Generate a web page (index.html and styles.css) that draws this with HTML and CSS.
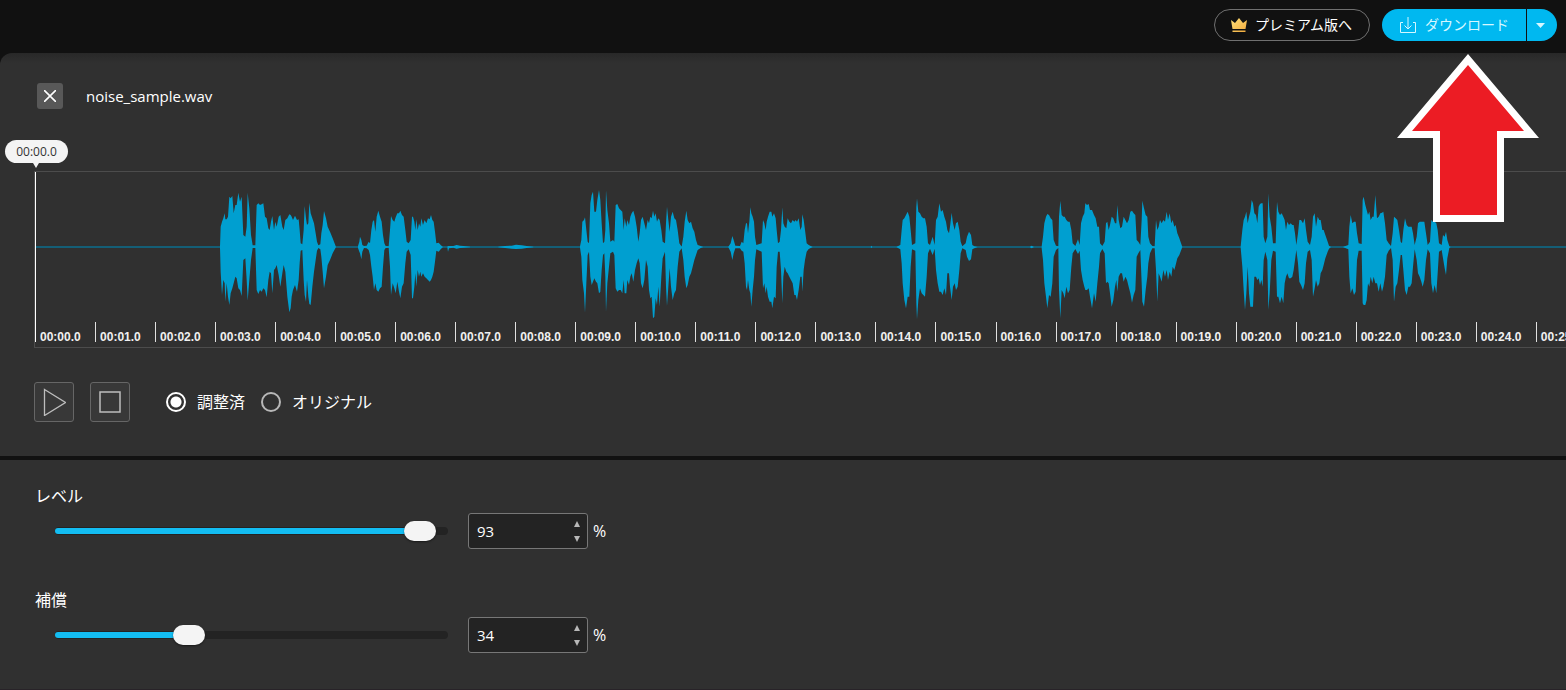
FILE: index.html
```html
<!DOCTYPE html>
<html lang="ja">
<head>
    <meta charset="UTF-8">
    <meta name="viewport" content="width=device-width, initial-scale=1.0">
    <title>noise_sample.wav</title>
    <link rel="stylesheet" href="styles.css">
</head>
<body>

    <header class="topbar">
        <button class="btn-premium" type="button">
            <svg width="16" height="15" viewBox="0 0 16 15" aria-hidden="true">
                <defs>
                    <linearGradient id="gold" x1="0" y1="0" x2="1" y2="1">
                        <stop offset="0" stop-color="#ffe27a"/>
                        <stop offset="1" stop-color="#f2a93b"/>
                    </linearGradient>
                </defs>
                <path fill="url(#gold)" d="M0 2L4 5L8 0L12 5L16 2L14.500 11H1.500Z M1.500 12.500H14.500V14H1.500Z"/>
            </svg>
            <span>プレミアム版へ</span>
        </button>
        <div class="download">
            <button class="download-main" type="button">
                <svg width="16" height="16" viewBox="0 0 16 16" fill="none" stroke="currentColor" aria-hidden="true">
                    <path d="M3 5.500H.5V15.500H15.500V5.500H13M8 0V12M4.500 8.500L8 12L11.500 8.500"/>
                </svg>
                <span>ダウンロード</span>
            </button>
            <button class="download-more" type="button" aria-label="その他の形式">
                <svg width="9" height="5" viewBox="0 0 9 5" fill="currentColor" aria-hidden="true"><path d="M0 0H9L4.500 5Z"/></svg>
            </button>
        </div>
    </header>

    <main>
        <section class="player">
            <div class="file-row">
                <button class="btn-close" type="button" aria-label="閉じる">
                    <svg width="12" height="12" viewBox="0 0 12 12" stroke="#fff" stroke-width="1.600" aria-hidden="true"><path d="M0 0L12 12M12 0L0 12"/></svg>
                </button>
                <span class="file-name">noise_sample.wav</span>
            </div>

            <div class="playhead-time">00:00.0</div>

            <div class="timeline">
                <svg class="wave" viewBox="0 0 4683 510" aria-hidden="true">
                    <path class="wave-axis" d="M0 201H4683"/>
                    <path class="wave-shape" id="waveShape"/>
                </svg>
                <ol class="ruler" id="ruler"></ol>
                <div class="playhead-line"></div>
            </div>

            <div class="controls">
                <button class="btn-square" type="button" aria-label="再生">
                    <svg width="24" height="28" viewBox="0 0 24 28" fill="none" stroke="#bdbdbd" stroke-width="1.300" aria-hidden="true"><path d="M2.500 1.500L23.500 14.500L2.500 27.500Z"/></svg>
                </button>
                <button class="btn-square" type="button" aria-label="停止">
                    <svg width="22" height="22" viewBox="0 0 22 22" fill="none" stroke="#bdbdbd" stroke-width="1.500" aria-hidden="true"><rect x="1" y="1" width="20" height="20"/></svg>
                </button>
                <div class="versions">
                    <label><input type="radio" name="version" checked>調整済</label>
                    <label><input type="radio" name="version">オリジナル</label>
                </div>
            </div>
        </section>

        <section class="settings">
            <div class="setting">
                <label for="level">レベル</label>
                <div class="setting-row">
                    <div class="slider">
                        <div class="track"><div class="fill" style="width: 93%"></div></div>
                        <input type="range" id="level" min="0" max="100" value="93">
                    </div>
                    <div class="number">
                        <input type="number" value="93" min="0" max="100" aria-label="レベル (%)">
                        <div class="steps">
                            <button type="button" class="up" aria-label="増やす"></button>
                            <button type="button" class="down" aria-label="減らす"></button>
                        </div>
                    </div>
                    <span class="unit">%</span>
                </div>
            </div>
            <div class="setting">
                <label for="makeup">補償</label>
                <div class="setting-row">
                    <div class="slider">
                        <div class="track"><div class="fill" style="width: 34%"></div></div>
                        <input type="range" id="makeup" min="0" max="100" value="34">
                    </div>
                    <div class="number">
                        <input type="number" value="34" min="0" max="100" aria-label="補償 (%)">
                        <div class="steps">
                            <button type="button" class="up" aria-label="増やす"></button>
                            <button type="button" class="down" aria-label="減らす"></button>
                        </div>
                    </div>
                    <span class="unit">%</span>
                </div>
            </div>
        </section>
    </main>

    <!-- Arrow pointing at the download button -->
    <svg class="pointer" width="142" height="168" viewBox="0 0 142 168" aria-hidden="true">
        <path fill="#fff" d="M71 0L142 84H107V168H36V84H0Z"/>
        <path fill="#ec1c24" d="M71 11L127 77H100V161H43V77H15Z"/>
    </svg>

    <script src="script.js"></script>
</body>
</html>
```
FILE: styles.css
```css
:root {
    --bar: #111111;
    --panel: #303030;
    --field: #232323;
    --blue: #00b8f0;
    --wave: #009fd0;
    --line: #4c4c4c;
    --light: #f4f4f4;
}
* {
    box-sizing: border-box;
}
body {
    margin: 0;
    min-height: 100vh;
    display: flex;
    flex-direction: column;
    position: relative;
    overflow-x: hidden;
    background: var(--bar);
    color: #fff;
    font-family: "Open Sans", "Noto Sans CJK JP", sans-serif;
    font-size: 16px;
    line-height: 24px;
}
button, input {
    font: inherit;
    color: inherit;
    margin: 0;
}
button {
    display: flex;
    align-items: center;
    justify-content: center;
    padding: 0;
    border: none;
    background: none;
    cursor: pointer;
}

/* Top bar */
.topbar {
    display: flex;
    justify-content: flex-end;
    gap: 12px;
    padding: 9px 9px 12px;
    font-size: 14px;
}
.btn-premium {
    height: 32px;
    padding: 0 17px 0 16px;
    gap: 8px;
    border: 1px solid #707070;
    border-radius: 16px;
}
.download {
    display: flex;
    gap: 1px;
    color: #d5f7ff;
}
.download button {
    height: 32px;
    background: var(--blue);
}
.download .download-main {
    gap: 9px;
    padding: 0 17px 0 18px;
    border-radius: 16px 0 0 16px;
}
.download .download-more {
    width: 30px;
    padding-right: 4px;
    border-radius: 0 16px 16px 0;
}

/* Player */
main {
    flex: 1;
    display: flex;
    flex-direction: column;
    gap: 4px;
}
.player {
    padding: 30px 0 34px 34px;
    overflow: hidden;
    border-top-left-radius: 12px;
    background: linear-gradient(#282828, var(--panel) 10px);
}
.file-row {
    display: flex;
    align-items: center;
    gap: 23px;
    padding-left: 3px;
}
.file-name {
    font-size: 15px;
}
.btn-close {
    width: 26px;
    height: 26px;
    border-radius: 3px;
    background: #585858;
}
.playhead-time {
    position: relative;
    width: 63px;
    margin: 31px 0 8px -29px;
    border-radius: 12px;
    background: var(--light);
    color: #333;
    font-size: 12px;
    line-height: 23px;
    text-align: center;
}
.playhead-time::after {
    content: "";
    position: absolute;
    top: 100%;
    left: 28px;
    border: 3px solid transparent;
    border-top: 5px solid var(--light);
}
.timeline {
    display: grid;
    width: 1562px;
    border: 1px solid var(--line);
    border-right: none;
}
.timeline > * {
    grid-area: 1 / 1;
}
.wave {
    display: block;
    width: 1561px;
    height: 170px;
    margin: 8px 0 -3px;
}
.wave-axis {
    stroke: #0b6e8e;
    stroke-width: 4;
}
.wave-shape {
    fill: var(--wave);
}
.ruler {
    align-self: end;
    display: flex;
    margin: 0 0 5px;
    padding: 0;
    list-style: none;
    font: bold 12px/12px "Liberation Sans", Arial, sans-serif;
}
.ruler li {
    flex: 1;
    padding: 9px 0 0 4px;
    height: 20px;
    border-left: 1px solid #e0e0e0;
    color: #f0f0f0;
}
.playhead-line {
    width: 1px;
    margin-bottom: 5px;
    background: #fff;
}
.controls {
    display: flex;
    align-items: center;
    gap: 16px;
    margin-top: 34px;
}
.btn-square {
    width: 40px;
    height: 40px;
    border: 1px solid #666;
    border-radius: 3px;
    background: #383838;
}
.versions {
    display: flex;
    gap: 16px;
    margin-left: 20px;
}
.versions label {
    display: flex;
    align-items: center;
    gap: 11px;
}
.versions input {
    appearance: none;
    width: 20px;
    height: 20px;
    border: 2px solid #b8b8b8;
    border-radius: 50%;
}
.versions input:checked {
    border-color: #fff;
    background: radial-gradient(circle, #fff 5px, transparent 6px);
}

/* Settings */
.settings {
    flex: 1;
    display: flex;
    flex-direction: column;
    gap: 39px;
    padding: 24px 35px 35px;
    border-bottom: 1px solid #282328;
    background: var(--panel);
}
.setting-row {
    display: flex;
    align-items: center;
    margin-top: 5px;
    padding-left: 20px;
}
.setting > label {
    display: block;
}
.slider {
    display: grid;
    align-items: center;
    width: 393px;
    margin-right: 20px;
}
.slider > * {
    grid-area: 1 / 1;
}
.track {
    display: flex;
    align-items: center;
    height: 8px;
    border-radius: 4px;
    background: var(--field);
}
.fill {
    height: 6px;
    border-radius: 3px;
    background: #13bdf2;
}
.slider input {
    appearance: none;
    height: 20px;
    margin: 0 -16px;
    background: none;
}
.slider input::-webkit-slider-thumb {
    appearance: none;
    width: 32px;
    height: 20px;
    border-radius: 10px;
    background: var(--light);
    box-shadow: 0 1px 2px rgba(0, 0, 0, 0.5);
}
.number {
    display: flex;
    width: 120px;
    height: 36px;
    border: 1px solid #777;
    border-radius: 3px;
    background: var(--field);
}
.number input {
    flex: 1;
    min-width: 0;
    padding: 0 0 0 8px;
    border: none;
    background: none;
    font-size: 15px;
    appearance: textfield;
}
.number input::-webkit-inner-spin-button {
    appearance: none;
}
.steps {
    display: flex;
    flex-direction: column;
    justify-content: center;
    gap: 9px;
    padding-right: 7px;
}
.up, .down {
    border: 3px solid transparent;
}
.up {
    border-top: none;
    border-bottom: 6px solid #b8b8b8;
}
.down {
    border-bottom: none;
    border-top: 6px solid #b8b8b8;
}
.unit {
    margin-left: 5px;
    font-size: 16px;
}

.pointer {
    position: absolute;
    top: 54px;
    right: 27px;
    pointer-events: none;
}
```
FILE: script.js
```js
// 180 units = 1 second, axis at y = 201. Each point is x,top,bottom.
const phrases = [
    { start: 495, points: "60,199,203 62,140,276 66,125,345 70,115,300 74,100,310 76,118,365 80,118,310 84,110,350 88,50,375 92,55,340 97,48,325 101,100,310 106,75,290 110,75,295 115,38,325 120,65,330 125,50,348 130,165,240 136,170,235 140,140,300 143,38,362 148,85,300 153,165,240 158,196,204 166,196,204 170,75,330 175,70,342 180,75,330 185,73,335 190,70,325 195,110,330 200,115,352 205,145,300 209,150,275 213,125,280 217,108,340 222,150,270 226,125,265 230,140,255 236,110,285 241,105,320 247,140,280 251,150,255 256,120,275 262,115,350 268,103,397 272,105,385 275,110,350 279,120,330 285,107,315 291,120,335 296,118,300 299,150,250 302,190,212 307,193,210 311,150,300 314,78,345 318,115,365 321,135,300 325,130,350 328,68,372 332,100,375 337,115,320 342,130,275 347,160,240 351,185,212 355,196,204 361,193,208 364,160,230 368,135,275 372,93,325 378,115,290 383,140,255 390,155,240 398,175,220 408,201,201" },
    { start: 495, points: "474,198,204 478,185,215 480,170,220 484,180,238 487,195,215 492,198,204 500,197,205 506,185,210 510,190,225 514,150,260 518,125,290 522,120,330 526,155,310 530,110,330 535,92,335 540,110,325 545,125,320 549,165,260 553,190,210 557,198,204 566,199,203 570,150,260 573,108,345 578,120,310 583,125,325 587,112,340 592,100,305 597,100,335 601,92,355 606,105,320 611,110,310 616,150,250 620,185,215 626,190,208 632,180,225 636,110,355 639,110,355 643,125,320 646,150,280 649,118,320 653,150,270 657,130,290 661,140,275 664,115,290 669,135,280 674,120,290 679,130,295 684,115,300 689,118,305 693,105,300 697,120,290 701,125,275 705,155,245 709,190,212 716,188,215 722,195,208 729,201,201" },
    { start: 1185, points: "52,200,202 54,198,215 57,198,205 70,198,203 80,195,206 90,197,204 100,198,203 120,200,202" },
    { start: 1185, points: "205,200,202 225,198,204 245,197,206 258,194,207 275,196,206 290,198,204 310,200,202" },
    { start: 1185, points: "450,199,203 454,180,230 457,125,300 462,120,340 465,112,398 469,150,310 473,185,225 477,190,215 481,70,290 485,45,315 489,35,305 493,95,295 498,95,305 502,60,310 507,30,340 511,60,335 515,130,270 519,190,225 523,185,220 526,150,290 528,30,395 532,90,310 537,130,260 541,185,220 549,180,215 553,185,225 557,75,325 562,72,335 567,85,330 572,90,330 577,95,340 581,150,300 584,115,340 589,140,340 592,120,300 597,135,315 601,110,290 605,100,280 610,92,305 615,110,270 620,140,250 625,185,235 629,160,250 633,120,310 638,110,325 643,130,300 648,150,240 653,120,260 657,130,330 661,110,355 665,115,350 669,92,415 673,110,410 677,100,355 681,125,375 685,115,320 689,120,380 694,150,290 698,185,235 705,190,215 708,130,320 711,80,378 715,120,320 719,155,265 723,110,320 728,95,360 733,115,340 738,120,330 743,150,260 748,190,215 755,200,205 760,170,240 764,125,290 769,92,325 773,120,315 778,130,290 783,125,280 788,145,260 793,155,240 798,180,225 803,195,210 812,198,204 820,201,201" },
    { start: 2025, points: "55,200,202 62,190,215 67,168,240 71,180,220 76,197,205 90,198,205 95,185,212 100,190,215 104,150,250 108,130,320 111,130,330 114,160,300 118,125,330 121,82,340 124,100,380 128,110,330 132,125,290 135,170,240 139,195,208 155,190,215 159,120,325 163,130,310 167,150,340 170,125,320 174,110,350 179,95,365 184,95,365 187,110,385 192,100,350 197,115,355 200,150,260 204,190,215 209,185,215 213,150,270 217,82,370 220,130,290 224,140,260 229,145,275 233,115,280 238,125,290 243,130,300 248,120,310 253,125,345 257,120,345 261,125,360 266,115,330 271,150,290 275,140,290 277,103,335 281,120,270 285,150,240 290,190,215 296,195,207 308,201,201" },
    { start: 2025, points: "482,201,201 484,197,204 487,201,201" },
    { start: 2025, points: "560,200,202 571,195,208 575,150,250 578,120,310 583,115,360 588,105,385 593,95,350 598,110,350 602,150,260 606,195,208 616,190,212 619,80,370 621,55,418 625,95,360 630,100,325 635,110,340 640,115,345 645,115,350 650,140,290 654,190,220 660,195,206 668,170,225 674,195,206 678,120,270 683,110,310 688,70,335 693,95,335 698,90,345 703,110,325 708,125,345 712,150,280 717,160,280 720,140,320 725,98,360 729,130,320 734,150,310 738,130,330 743,125,320 748,150,270 752,185,220 757,199,205 767,190,210 771,170,230 777,155,243 783,165,238 787,195,208 793,199,205 803,201,201" },
    { start: 2925, points: "60,200,202 65,197,205 72,201,201" },
    { start: 2925, points: "95,199,205 99,170,240 103,130,310 108,110,350 112,102,385 117,105,345 122,115,350 127,120,310 131,180,230 138,197,210 145,199,204 147,110,330 151,62,415 155,105,330 160,110,340 164,110,355 169,120,320 174,125,340 179,125,330 184,150,260 188,190,220 196,198,207 204,178,222 209,195,212 213,130,270 218,110,300 223,100,320 226,70,330 231,75,330 236,72,325 240,90,350 246,90,385 252,105,340 257,115,365 262,140,310 267,140,260 270,190,220 277,198,207 284,185,220 288,130,310 292,125,305 296,150,310 300,135,340 305,110,380 310,115,360 315,130,320 319,130,300 322,75,335 326,120,290 331,145,280 336,140,280 341,110,305 346,120,290 351,130,300 356,120,320 361,95,340 366,92,368 371,100,345 376,105,330 380,180,230 385,185,220 391,195,210 395,120,310 397,62,365 402,85,380 407,105,330 412,110,290 415,170,250 420,190,220 427,198,205 434,199,205 438,120,270 442,150,365 446,140,280 450,120,290 455,130,305 460,120,270 465,125,290 470,95,270 474,120,300 479,100,275 484,130,290 488,120,260 493,140,270 497,135,255 502,160,235 508,175,225 517,201,201" },
    { start: 3495, points: "122,199,203 127,150,260 131,120,330 135,110,390 139,95,340 143,130,260 147,110,340 151,95,380 155,60,380 159,70,380 163,100,290 168,105,290 172,130,300 176,80,295 180,72,315 184,70,300 188,70,320 191,170,240 196,190,215 202,170,240 205,40,390 209,110,340 214,140,240 219,190,212 227,190,215 231,65,350 235,95,350 240,105,370 245,100,350 250,110,370 254,120,310 258,150,290 262,125,280 267,135,295 272,130,295 277,135,290 281,135,270 285,160,240 289,195,210 294,160,250 298,120,305 303,120,315 309,130,330 314,115,310 318,150,250 323,185,215 330,195,210 335,170,240 339,110,350 344,100,325 348,140,300 353,110,320 358,120,310 362,120,280 367,150,270 371,150,255 376,165,235 383,185,215 387,197,206 393,201,201" },
    { start: 3495, points: "430,200,202 445,195,208 448,140,290 452,105,340 457,130,325 462,125,345 467,125,335 471,160,240 476,190,212 485,192,212 488,60,370 491,50,375 496,75,375 500,90,360 504,105,310 508,95,320 512,120,290 517,110,310 521,110,290 526,45,310 531,115,310 536,110,335 541,100,310 546,98,335 550,95,320 555,130,290 560,180,225 566,190,212 573,198,204 578,160,240 582,110,365 587,115,320 592,120,310 597,150,270 602,185,225 606,190,225 610,150,270 615,115,330 620,135,345 625,140,320 630,140,320 635,140,310 639,160,260 644,195,208 650,170,240 654,130,280 659,125,290 664,125,305 668,125,320 673,125,300 678,160,240 683,195,208 690,185,220 694,120,310 699,125,340 704,125,315 709,130,340 713,150,280 717,190,215 725,195,210 729,165,235 734,170,265 738,155,285 742,180,235 748,199,204 752,201,201" }
];

function phrasePath(phrase) {
    const points = phrase.points.split(" ").map(p => p.split(",").map(Number));
    const top = points.map(([x, t]) => `${x + phrase.start} ${t}`);
    const bottom = points.map(([x, , b]) => `${x + phrase.start} ${b}`).reverse();
    return "M" + top.concat(bottom).join("L") + "Z";
}

document.getElementById("waveShape").setAttribute("d", phrases.map(phrasePath).join(""));

// Ruler, one mark per second
const ruler = document.getElementById("ruler");
for (let s = 0; s < 26; s++) {
    const mark = document.createElement("li");
    mark.textContent = `00:${String(s).padStart(2, "0")}.0`;
    ruler.appendChild(mark);
}

// Keep each slider, its fill and its number box together
document.querySelectorAll(".setting").forEach(setting => {
    const range = setting.querySelector("input[type=range]");
    const number = setting.querySelector("input[type=number]");
    const fill = setting.querySelector(".fill");

    function update(value) {
        range.value = value;
        number.value = range.value;
        fill.style.width = range.value + "%";
    }

    range.addEventListener("input", () => update(range.value));
    number.addEventListener("change", () => update(number.value));
    setting.querySelector(".up").addEventListener("click", () => update(Number(range.value) + 1));
    setting.querySelector(".down").addEventListener("click", () => update(Number(range.value) - 1));
});
```
